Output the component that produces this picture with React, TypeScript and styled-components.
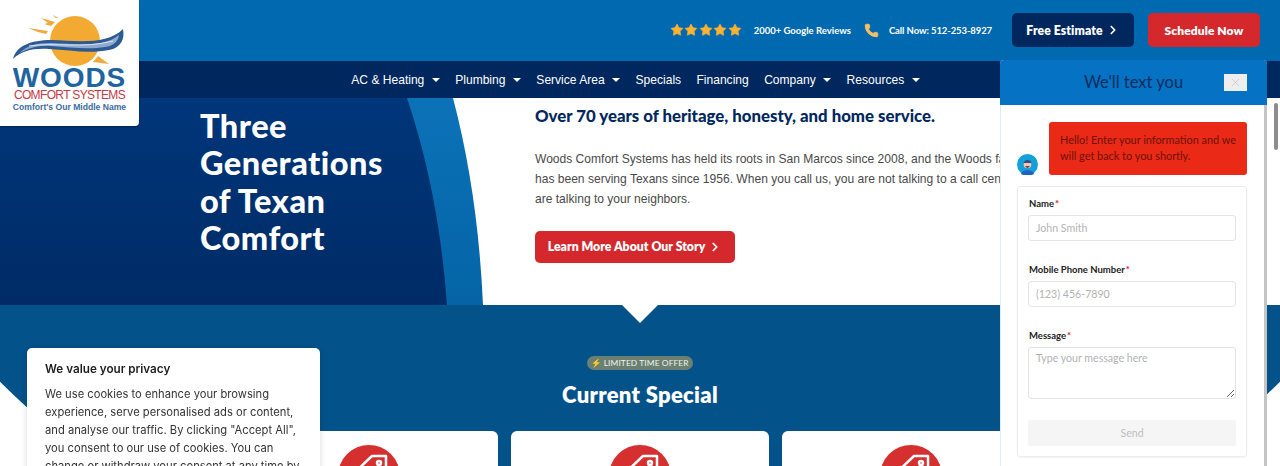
import { Star, Phone, ChevronRight, X } from "lucide-react"
import styled, { createGlobalStyle } from "styled-components"

const GlobalStyle = createGlobalStyle`
  html, body {
    margin: 0;
    height: 466px;
    overflow: hidden;
    background: #fff;
  }
  * { box-sizing: border-box; }
`

const heading = `"Lato", "Liberation Sans", sans-serif`
const sans = `"Liberation Sans", Arial, sans-serif`
const chatFont = `"Lato", "Open Sans", sans-serif`

const Page = styled.div`
  width: 1280px;
  height: 466px;
  overflow: hidden;
  position: relative;
  font-family: ${sans};
`

const Header = styled.header`
  position: relative;
  z-index: 3;
`

const TopBar = styled.div`
  height: 61px;
  background: #0069b0;
  display: flex;
  align-items: center;
  justify-content: flex-end;
  padding: 0 20px 1px 0;
`

const Stars = styled.div`
  display: flex;
  gap: 0.5px;
  margin-right: 12px;
  color: #f9b233;
`

const TopLabel = styled.span<{ $tight?: boolean }>`
  font-family: ${heading};
  font-weight: 700;
  font-size: 9.5px;
  letter-spacing: ${p => (p.$tight ? "-0.1px" : "0")};
  color: #fff;
  white-space: nowrap;
`

const PhoneIcon = styled(Phone)`
  margin: 0 10px 0 13px;
  color: #f5c063;
  fill: #f5c063;
`

const CtaButton = styled.a<{ $navy?: boolean }>`
  height: 34px;
  display: flex;
  align-items: center;
  justify-content: center;
  gap: 3px;
  border-radius: 5px;
  font-family: ${heading};
  font-weight: 800;
  font-size: ${p => (p.$navy ? "12.2px" : "12px")};
  letter-spacing: 0.1px;
  color: #fff;
  background: ${p => (p.$navy ? "#00275e" : "#d5282d")};
  width: ${p => (p.$navy ? "122px" : "112px")};
  margin-left: ${p => (p.$navy ? "20px" : "14px")};
`

const NavBar = styled.nav`
  height: 37px;
  background: #00275e;
  display: flex;
  align-items: center;
  justify-content: center;
  gap: 15.4px;
  padding-right: 9px;
`

const NavItem = styled.a`
  display: flex;
  align-items: center;
  gap: 7.5px;
  font-size: 12.05px;
  color: #fff;
`

const Caret = styled.i`
  width: 0;
  height: 0;
  border-left: 4.5px solid transparent;
  border-right: 4.5px solid transparent;
  border-top: 4.5px solid #fff;
`

const LogoBox = styled.div`
  position: absolute;
  left: 0;
  top: 0;
  width: 139px;
  height: 126px;
  background: #fff;
  border-bottom-right-radius: 4px;
  display: flex;
  flex-direction: column;
  align-items: center;
  padding-top: 13px;
  box-shadow: 0 1px 2px rgba(0, 0, 0, 0.3);
`

const LogoMark = styled.svg`
  display: block;
  flex-shrink: 0;
`

const LogoName = styled.span`
  font-weight: 700;
  font-size: 28px;
  line-height: 21px;
  letter-spacing: 0.9px;
  color: #1f639f;
  margin-top: -2px;
`

const LogoSub = styled.span`
  font-size: 12px;
  line-height: 13px;
  letter-spacing: -0.65px;
  color: #c33b46;
  white-space: nowrap;
  margin-top: 1px;
`

const LogoTag = styled.span`
  font-weight: 700;
  font-size: 8.6px;
  line-height: 11px;
  color: #3b6ca0;
  white-space: nowrap;
`

const Hero = styled.section`
  position: relative;
  z-index: 2;
  height: 207px;
  overflow: hidden;
  background: #fff;
  display: flex;
`

const HeroArt = styled.svg`
  position: absolute;
  inset: 0;
`

const HeroLeft = styled.div`
  position: relative;
  width: 535px;
  padding: 9px 0 0 200px;
`

const HeroTitle = styled.h1`
  margin: 0;
  font-family: ${heading};
  font-weight: 900;
  font-size: 32.5px;
  line-height: 37.3px;
  letter-spacing: 0.5px;
  color: #fff;
`

const HeroRight = styled.div`
  position: relative;
  width: 540px;
  padding-top: 7px;
`

const HeroLead = styled.h2`
  margin: 0 0 22px;
  font-family: ${heading};
  font-weight: 900;
  font-size: 16.8px;
  line-height: 22px;
  color: #00275e;
  white-space: nowrap;
`

const HeroText = styled.p`
  margin: 0 0 21px;
  font-size: 12.05px;
  line-height: 20.2px;
  color: #4a4a4a;
  white-space: nowrap;
`

const RedButton = styled.a`
  display: inline-flex;
  align-items: center;
  gap: 3px;
  height: 32px;
  width: 200px;
  justify-content: center;
  border-radius: 5px;
  background: #d5282d;
  color: #fff;
  font-family: ${heading};
  font-weight: 800;
  font-size: 12.3px;
`

const Specials = styled.section`
  position: relative;
  display: flex;
  flex-direction: column;
  align-items: center;
  padding-top: 51px;
  &::before {
    content: "";
    position: absolute;
    top: -454px;
    left: -220px;
    right: -220px;
    height: 750px;
    background: #04528a;
    border-radius: 0 0 750px 750px;
  }
  &::after {
    content: "";
    position: absolute;
    top: 0;
    left: 50%;
    margin-left: -18px;
    border-left: 18px solid transparent;
    border-right: 18px solid transparent;
    border-top: 18px solid #fff;
  }
`

const OfferPill = styled.span`
  position: relative;
  height: 14px;
  width: 106px;
  border-radius: 7px;
  background: #6a8073;
  display: flex;
  align-items: center;
  justify-content: center;
  gap: 3px;
  font-family: ${heading};
  font-size: 8.4px;
  letter-spacing: 0.1px;
  color: #f2f2ea;
`

const SpecialsTitle = styled.h2`
  position: relative;
  margin: 11px 0 0;
  font-family: ${heading};
  font-weight: 800;
  font-size: 22px;
  line-height: 27px;
  letter-spacing: 0.3px;
  color: #fff;
`

const CardRow = styled.div`
  position: relative;
  display: flex;
  gap: 13px;
  margin-top: 23px;
`

const Card = styled.article`
  width: 258px;
  height: 240px;
  background: #fff;
  border-radius: 6px;
  display: flex;
  justify-content: center;
  padding-top: 14px;
`

const CardBadge = styled.div`
  width: 62px;
  height: 62px;
  border-radius: 50%;
  background: #d5302f;
`

const CookieBox = styled.aside`
  position: fixed;
  left: 27px;
  top: 348px;
  width: 293px;
  height: 200px;
  padding: 13px 18px;
  background: #fff;
  border-radius: 5px;
  font-family: "Inter", sans-serif;
  box-shadow: 0 1px 6px rgba(0, 0, 0, 0.15);
  z-index: 4;
`

const CookieTitle = styled.h3`
  margin: 0 0 7px;
  font-size: 11.7px;
  line-height: 17px;
  font-weight: 600;
  color: #1c1c1c;
`

const CookieText = styled.p`
  margin: 0;
  font-size: 11.2px;
  line-height: 18px;
  color: #333;
  white-space: nowrap;
`

const ChatPanel = styled.aside`
  position: fixed;
  left: 1000px;
  top: 60px;
  width: 267px;
  height: 500px;
  background: #fff;
  border-left: 1px solid #dcecf6;
  border-right: 3px solid #c4c4c4;
  border-radius: 4px 4px 0 0;
  z-index: 5;
`

const ChatHeader = styled.div`
  position: relative;
  height: 45px;
  margin: 0 -3px 0 -1px;
  background: #0672c4;
  border-radius: 4px 4px 0 0;
  display: flex;
  align-items: center;
  justify-content: center;
  padding-bottom: 1px;
  font-family: ${chatFont};
  font-size: 16.5px;
  color: #0b2c5c;
`

const CloseButton = styled.button`
  position: absolute;
  right: 20px;
  top: 14px;
  width: 23px;
  height: 17px;
  padding: 0;
  border: 0;
  background: #eeeeee;
  color: #b5b5b5;
  display: flex;
  align-items: center;
  justify-content: center;
`

const ChatBody = styled.div`
  padding: 17px 17px 0 16px;
`

const Greeting = styled.div`
  display: flex;
  align-items: flex-end;
  justify-content: space-between;
`

const Avatar = styled.svg`
  display: block;
`

const Bubble = styled.div`
  width: 198px;
  height: 53px;
  padding: 10px 11px;
  border-radius: 3px;
  background: #ea2a17;
  color: #6d1208;
  font-family: ${chatFont};
  font-size: 10.9px;
  line-height: 16px;
`

const ChatForm = styled.form`
  margin-top: 11px;
  width: 230px;
  height: 271px;
  padding: 10px 10px;
  border: 1px solid #ececec;
  border-radius: 3px;
  display: flex;
  flex-direction: column;
  box-shadow: 0 1px 2px rgba(0, 0, 0, 0.05);
`

const FieldLabel = styled.label`
  display: block;
  height: 14px;
  margin: 0 0 4px 1px;
  font-family: ${chatFont};
  font-weight: 700;
  font-size: 9.5px;
  line-height: 14px;
  color: #222;
  & b { color: #d5282d; margin-left: 1px; }
`

const TextInput = styled.input`
  display: block;
  width: 208px;
  height: 26px;
  padding: 0 7px;
  margin-bottom: 22px;
  border: 1px solid #e4e4e4;
  border-radius: 3px;
  font-family: ${chatFont};
  font-size: 10.6px;
  outline: 0;
  &::placeholder { color: #b3b3b3; }
`

const MessageInput = styled.textarea`
  display: block;
  width: 208px;
  height: 52px;
  padding: 4px 7px;
  margin-bottom: 21px;
  border: 1px solid #e4e4e4;
  border-radius: 3px;
  font-family: ${chatFont};
  font-size: 10.6px;
  outline: 0;
  &::placeholder { color: #b3b3b3; }
`

const SendButton = styled.button`
  width: 208px;
  height: 26px;
  border: 0;
  border-radius: 2px;
  background: #f5f5f5;
  color: #bdbdbd;
  font-family: ${chatFont};
  font-size: 10.6px;
`

const ScrollThumb = styled.div`
  position: fixed;
  left: 1274px;
  top: 103px;
  width: 4px;
  height: 47px;
  border-radius: 2px;
  background: #8d8d8d;
  z-index: 6;
`

const navItems = [
  { label: "AC & Heating", caret: true },
  { label: "Plumbing", caret: true },
  { label: "Service Area", caret: true },
  { label: "Specials" },
  { label: "Financing" },
  { label: "Company", caret: true },
  { label: "Resources", caret: true },
]

const WoodsMark = () => (
  <LogoMark width="114" height="56" viewBox="0 0 114 56">
    <circle cx="62" cy="28" r="25" fill="#f2aa33" />
    <path d="M28 5 L42 9 L38 13 L31 11 L35 10 Z" fill="#f0a93d" />
    <path d="M15 15 L35 18 L33 21 L25 19 Z" fill="#f0a93d" />
    <path d="M40 2 L46 5 L42 5 Z" fill="#f3c07a" />
    <path d="M85 43 L96 51 L80 49 Z" fill="#f0a93d" />
    <path d="M0 46 C3 33 18 27 38 27 C66 28 94 32 110 16 C112 26 108 35 96 37 C76 41 56 37 36 36 C20 35 8 38 0 46 Z" fill="#2c5a92" />
    <path d="M6 41 C12 33 24 30 38 30 C64 31 90 35 106 22 C105 29 100 33 92 34 C74 37 56 34 38 33 C26 32 14 35 6 41 Z" fill="#8fa9cf" />
    <path d="M16 33 C40 29 70 36 100 28" stroke="#dfe7f2" strokeWidth="1" fill="none" />
  </LogoMark>
)

const HeroBackdrop = () => (
  <HeroArt width="1280" height="207" viewBox="0 0 1280 207">
    <defs>
      <linearGradient id="heroNavy" x1="0" y1="0" x2="0" y2="1">
        <stop offset="0" stopColor="#00367a" />
        <stop offset="1" stopColor="#002b66" />
      </linearGradient>
      <linearGradient id="heroBlue" x1="0" y1="0" x2="0" y2="1">
        <stop offset="0" stopColor="#0c72b8" />
        <stop offset="1" stopColor="#0464a6" />
      </linearGradient>
    </defs>
    <path d="M0 0 H453 Q478 95 483 207 H0 Z" fill="url(#heroBlue)" />
    <path d="M0 0 H407 Q439 95 447 207 H0 Z" fill="url(#heroNavy)" />
  </HeroArt>
)

const AgentAvatar = () => (
  <Avatar width="21" height="21" viewBox="0 0 21 21">
    <circle cx="10.5" cy="10.5" r="10.5" fill="#14a0d8" />
    <path d="M4 20 C5 15 16 15 17 20 C14 22 7 22 4 20 Z" fill="#1c62c4" />
    <circle cx="10.5" cy="10.5" r="3.8" fill="#f4c6b4" />
    <path d="M6.5 9 C7 5 14 5 14.5 9 Z" fill="#2f4f86" />
    <path d="M8 12 H13 L10.5 14.5 Z" fill="#8a3a3a" />
  </Avatar>
)

const TagGlyph = () => (
  <svg width="62" height="62" viewBox="0 0 62 62" fill="none" stroke="#fff" strokeWidth="2.5" strokeLinejoin="round">
    <path d="M14 30 L34 11 H48 V25 L28 46 Z" />
    <circle cx="41" cy="18" r="2" />
  </svg>
)

export default function App() {
  return (
    <Page>
      <GlobalStyle />
      <Header>
        <TopBar>
          <Stars>
            {[0, 1, 2, 3, 4].map(i => (
              <Star key={i} size={14} fill="#f9b233" strokeWidth={1} />
            ))}
          </Stars>
          <TopLabel>2000+ Google Reviews</TopLabel>
          <PhoneIcon size={15} strokeWidth={1.5} />
          <TopLabel $tight>Call Now: 512-253-8927</TopLabel>
          <CtaButton $navy>
            Free Estimate <ChevronRight size={14} strokeWidth={3} />
          </CtaButton>
          <CtaButton>Schedule Now</CtaButton>
        </TopBar>
        <NavBar>
          {navItems.map(item => (
            <NavItem key={item.label}>
              {item.label}
              {item.caret && <Caret />}
            </NavItem>
          ))}
        </NavBar>
        <LogoBox>
          <WoodsMark />
          <LogoName>WOODS</LogoName>
          <LogoSub>COMFORT SYSTEMS</LogoSub>
          <LogoTag>Comfort's Our Middle Name</LogoTag>
        </LogoBox>
      </Header>

      <Hero>
        <HeroBackdrop />
        <HeroLeft>
          <HeroTitle>
            Three
            <br />
            Generations
            <br />
            of Texan
            <br />
            Comfort
          </HeroTitle>
        </HeroLeft>
        <HeroRight>
          <HeroLead>Over 70 years of heritage, honesty, and home service.</HeroLead>
          <HeroText>
            Woods Comfort Systems has held its roots in San Marcos since 2008, and the Woods family
            <br />
            has been serving Texans since 1956. When you call us, you are not talking to a call center, you
            <br />
            are talking to your neighbors.
          </HeroText>
          <RedButton>
            Learn More About Our Story <ChevronRight size={14} strokeWidth={3} />
          </RedButton>
        </HeroRight>
      </Hero>

      <Specials>
        <OfferPill>⚡ LIMITED TIME OFFER</OfferPill>
        <SpecialsTitle>Current Special</SpecialsTitle>
        <CardRow>
          {[0, 1, 2].map(i => (
            <Card key={i}>
              <CardBadge>
                <TagGlyph />
              </CardBadge>
            </Card>
          ))}
        </CardRow>
      </Specials>

      <CookieBox>
        <CookieTitle>We value your privacy</CookieTitle>
        <CookieText>
          We use cookies to enhance your browsing
          <br />
          experience, serve personalised ads or content,
          <br />
          and analyse our traffic. By clicking "Accept All",
          <br />
          you consent to our use of cookies. You can
          <br />
          change or withdraw your consent at any time by
        </CookieText>
      </CookieBox>

      <ChatPanel>
        <ChatHeader>
          We'll text you
          <CloseButton type="button">
            <X size={13} strokeWidth={1} />
          </CloseButton>
        </ChatHeader>
        <ChatBody>
          <Greeting>
            <AgentAvatar />
            <Bubble>Hello! Enter your information and we will get back to you shortly.</Bubble>
          </Greeting>
          <ChatForm>
            <FieldLabel>
              Name<b>*</b>
            </FieldLabel>
            <TextInput placeholder="John Smith" />
            <FieldLabel>
              Mobile Phone Number<b>*</b>
            </FieldLabel>
            <TextInput placeholder="(123) 456-7890" />
            <FieldLabel>
              Message<b>*</b>
            </FieldLabel>
            <MessageInput placeholder="Type your message here" />
            <SendButton type="button">Send</SendButton>
          </ChatForm>
        </ChatBody>
      </ChatPanel>
      <ScrollThumb />
    </Page>
  )
}
